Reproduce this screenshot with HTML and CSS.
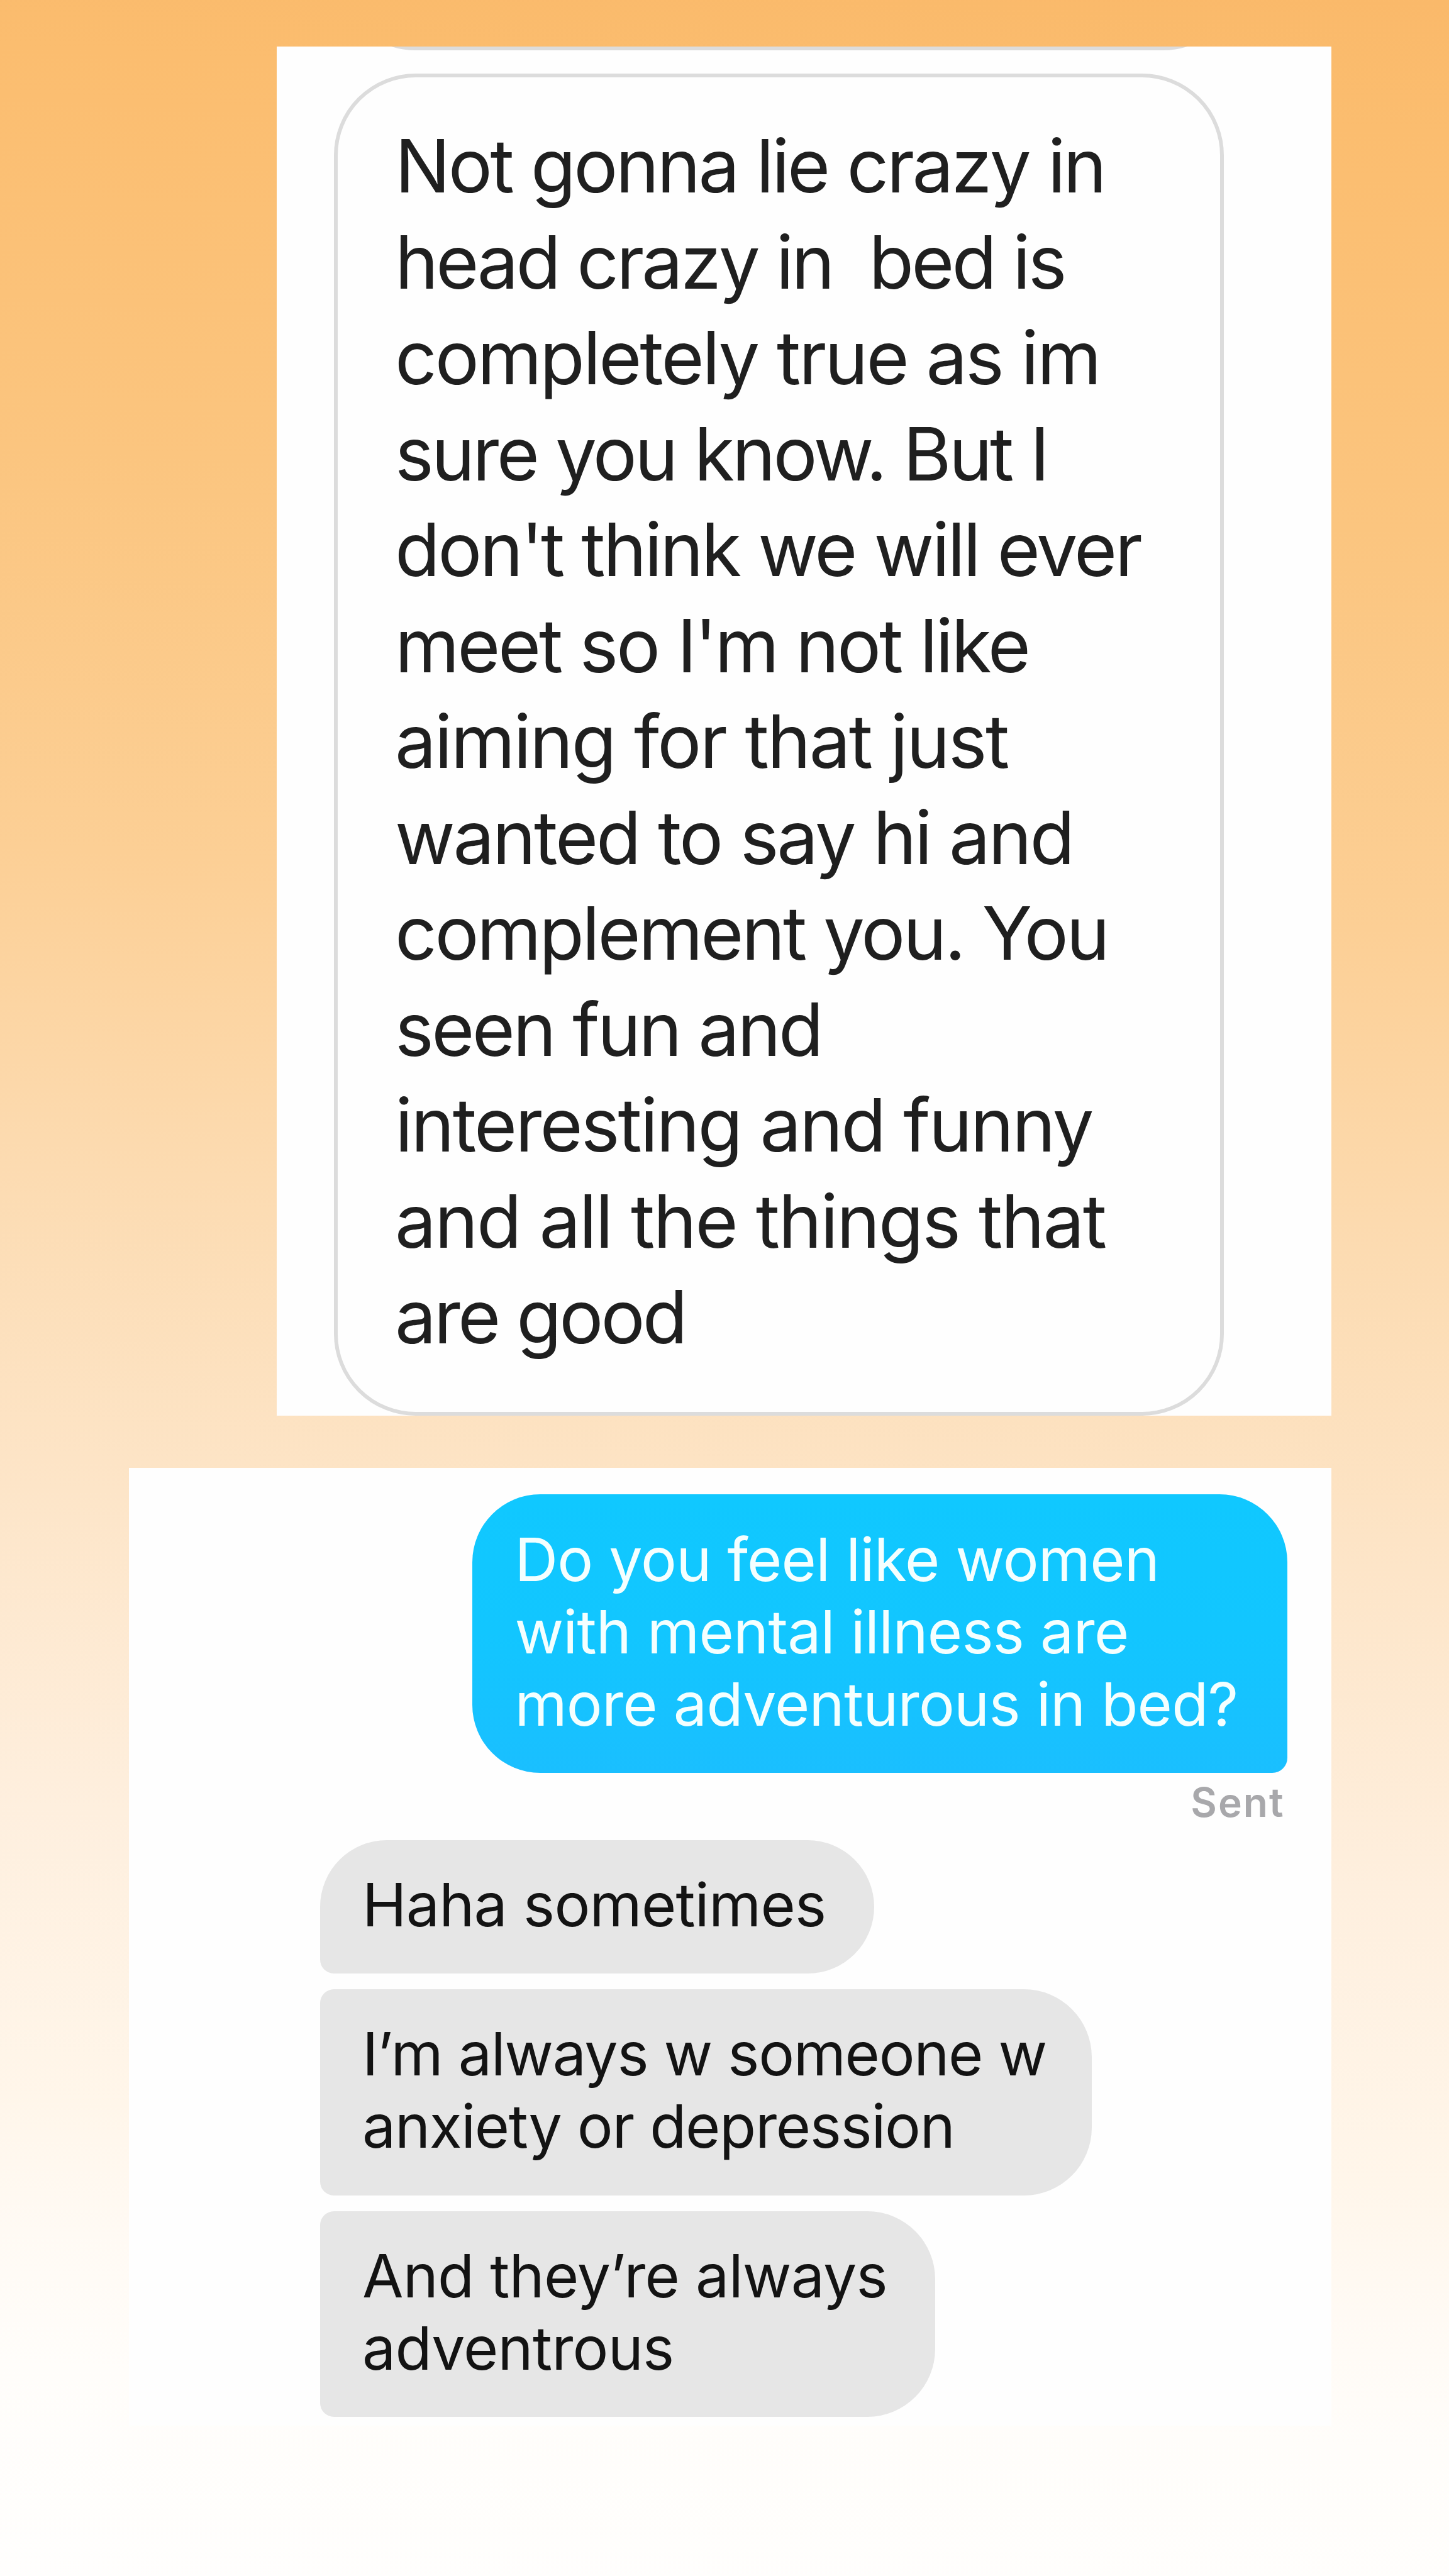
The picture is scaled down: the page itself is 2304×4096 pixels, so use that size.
FILE: index.html
```html
<!DOCTYPE html>
<html lang="en">
<head>
  <meta charset="UTF-8">
  <title>Messages</title>
  <link rel="stylesheet" href="styles.css">
</head>
<body>
<div class="story">

  <div class="panel panel-top">
    <div class="outline previous"></div>
    <div class="outline message">
      <span class="line t1">Not gonna lie crazy in</span>
      <span class="line t2">head crazy in&nbsp; bed is</span>
      <span class="line t3">completely true as im</span>
      <span class="line t4">sure you know. But I</span>
      <span class="line t5">don't think we will ever</span>
      <span class="line t6">meet so I'm not like</span>
      <span class="line t7">aiming for that just</span>
      <span class="line t8">wanted to say hi and</span>
      <span class="line t9">complement you. You</span>
      <span class="line t10">seen fun and</span>
      <span class="line t11">interesting and funny</span>
      <span class="line t12">and all the things that</span>
      <span class="line t13">are good</span>
    </div>
  </div>

  <div class="panel panel-chat">
    <div class="bubble sent">
      <span class="line">Do you feel like women</span>
      <span class="line">with mental illness are</span>
      <span class="line">more adventurous in bed?</span>
    </div>
    <div class="status">Sent</div>

    <div class="replies">
      <div class="bubble received first">
        <span class="line">Haha sometimes</span>
      </div>
      <div class="bubble received second">
        <span class="line wide">I’m always w someone w</span>
        <span class="line wide">anxiety or depression</span>
      </div>
      <div class="bubble received third">
        <span class="line">And they’re always</span>
        <span class="line">adventrous</span>
      </div>
    </div>
  </div>

</div>
</body>
</html>
```
FILE: styles.css
```css
* {
  box-sizing: border-box;
}

body {
  margin: 0;
  font-family: Inter, "Liberation Sans", sans-serif;
}

.story {
  display: flex;
  flex-direction: column;
  align-items: flex-end;
  gap: 82.5px;
  width: 2304px;
  height: 4096px;
  padding: 74px 187.5px 0 0;
  overflow: hidden;
  background: linear-gradient(183.5deg,
    #fab96a 0%,
    #fbbd6f 5%,
    #fbc57f 20%,
    #fccf95 35%,
    #fcdbb1 47%,
    #fde5c8 59%,
    #feefde 71%,
    #fff6ea 82%,
    #fffaf4 87%,
    #fffdfa 92%,
    #fffefd 100%);
}

.panel {
  background: #fefefe;
}

.line {
  display: block;
  white-space: nowrap;
}

/* outlined message */
.panel-top {
  width: 1677px;
  height: 2177px;
  padding-left: 91.5px;
  overflow: hidden;
}

.outline {
  border: 6px solid #dcdcdc;
}

/* only the bottom edge shows */
.previous {
  width: 1448px;
  height: 300px;
  margin-top: -294px;
  border-radius: 130px;
}

.message {
  width: 1415px;
  height: 2134px;
  margin-top: 37px;
  padding: 65px 0 0 91px;
  border-radius: 130px;
  font-size: 117px;
  line-height: 152.5px;
  color: #1f1f1f;
}

.t1 { letter-spacing: -3.4px; }
.t2 { letter-spacing: -3.9px; }
.t3 { letter-spacing: -3.05px; }
.t4 { letter-spacing: -3.8px; }
.t5 { letter-spacing: -3.5px; }
.t6 { letter-spacing: -3.3px; }
.t7 { letter-spacing: -2.65px; }
.t8 { letter-spacing: -3.2px; }
.t9 { letter-spacing: -3.4px; }
.t10 { letter-spacing: -3.6px; }
.t11 { letter-spacing: -2.9px; }
.t12 { letter-spacing: -2.45px; }
.t13 { letter-spacing: -3.9px; }

/* chat */
.panel-chat {
  display: flex;
  flex-direction: column;
  align-items: flex-end;
  width: 1912px;
  height: 1523.5px;
  padding: 42px 70px 0 304px;
}

.bubble {
  padding: 44.8px 0 51.9px 67.4px;
  font-size: 95px;
  line-height: 115.3px;
  letter-spacing: -0.8px;
}

.sent {
  width: 1295.5px;
  padding-top: 46px;
  padding-bottom: 51.7px;
  border-radius: 108px 108px 24px 108px;
  background: linear-gradient(#10c8ff, #12c6ff 50%, #1abfff);
  color: #f4ffff;
}

.status {
  height: 107px;
  padding: 8px 4px 0 0;
  font-size: 64px;
  font-weight: 600;
  line-height: 77px;
  letter-spacing: 2px;
  color: #a8a8ab;
}

.replies {
  display: flex;
  flex-direction: column;
  align-self: flex-start;
  gap: 25.2px;
}

.received {
  background: #e6e6e6;
  color: #131313;
}

.first {
  width: 881px;
  border-radius: 106px 106px 106px 22px;
}

.second {
  width: 1227.5px;
  border-radius: 22px 108px 108px 22px;
}

.third {
  width: 978px;
  border-radius: 22px 108px 108px 22px;
}

.wide {
  letter-spacing: -1.35px;
}
```
